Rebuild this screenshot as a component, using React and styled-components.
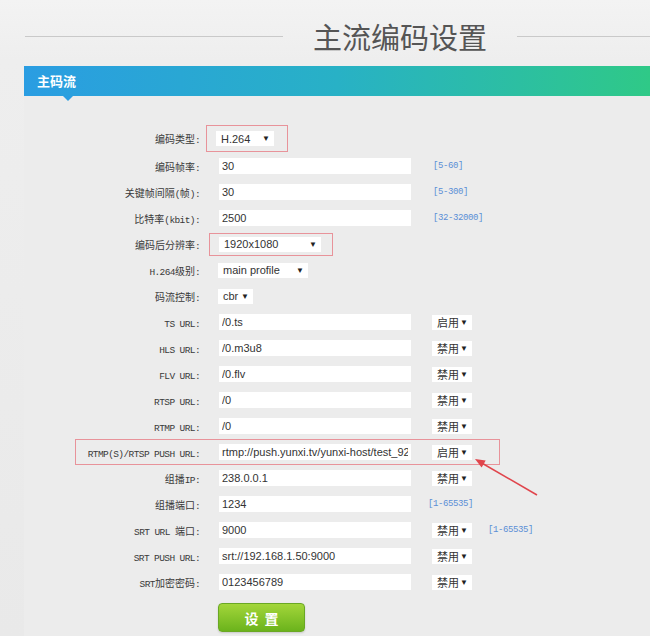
import React from 'react';
import styled, { createGlobalStyle } from 'styled-components';

const GlobalStyle = createGlobalStyle`
  body {
    margin: 0;
    background: #e9e9e9;
  }
`;

const Page = styled.div`
  width: 650px;
  height: 636px;
  overflow: hidden;
  position: relative;
  background: linear-gradient(#f3f3f3 0, #eeeeee 60px, #e9e9e9 100%);
  font-family: 'Noto Sans CJK SC', sans-serif;
`;

const TitleBar = styled.div`
  display: flex;
  align-items: center;
  height: 66px;
  padding: 7px 0 0 25px;
  box-sizing: border-box;
  gap: 30px;
`;

const Line = styled.div`
  height: 1px;
  background: #c9c9c9;
  flex: ${(p) => (p.$grow ? '1' : `0 0 ${p.$w}px`)};
`;

const Title = styled.h1`
  margin: 0;
  font-size: 29px;
  font-weight: 400;
  line-height: 1;
  color: #555;
`;

const Panel = styled.div`
  margin-left: 24px;
  background: #ececec;
`;

const Header = styled.div`
  position: relative;
  height: 30px;
  line-height: 30px;
  padding-left: 13px;
  color: #fff;
  font-size: 13px;
  font-weight: 700;
  background: linear-gradient(90deg, #2a9de2 0%, #28b1c6 50%, #2fc987 100%);
  &::after {
    content: '';
    position: absolute;
    left: 39px;
    bottom: -5px;
    border-left: 5px solid transparent;
    border-right: 5px solid transparent;
    border-top: 5px solid #2a9de2;
  }
`;

const Body = styled.div`
  display: flex;
  flex-direction: column;
  padding-top: 28px;
  height: 540px;
`;

const Row = styled.div`
  position: relative;
  display: flex;
  align-items: center;
  height: ${(p) => p.$h || 26}px;
  ${(p) =>
    p.$marked &&
    `&::before {
      content: '';
      position: absolute;
      left: 51px;
      width: 425px;
      top: 0;
      bottom: 0;
      border: 1px solid #e8939a;
      box-sizing: border-box;
    }`}
`;

const Label = styled.div`
  flex: 0 0 176px;
  text-align: right;
  font-size: 10px;
  color: #3a3a3a;
  white-space: nowrap;
`;

const Latin = styled.span`
  font-family: 'Liberation Mono', monospace;
  font-size: 9.5px;
  letter-spacing: -0.6px;
`;

const Field = styled.input`
  flex: 0 0 192px;
  width: 192px;
  height: 16px;
  margin: 0 0 0 19px;
  padding: 0 3px;
  box-sizing: border-box;
  border: none;
  outline: none;
  background: #fff;
  color: #333;
  font-family: 'Liberation Sans', Arial, sans-serif;
  font-size: 11px;
`;

const Select = styled.div`
  display: flex;
  align-items: center;
  justify-content: space-between;
  flex: 0 0 ${(p) => p.$w}px;
  width: ${(p) => p.$w}px;
  height: 15px;
  margin-left: ${(p) => p.$ml || 0}px;
  padding: 0 4px 0 5px;
  box-sizing: border-box;
  background: #fff;
  color: #333;
  font-family: 'Liberation Sans', 'Noto Sans CJK SC', sans-serif;
  font-size: 11px;
`;

const Caret = styled.span`
  font-size: 8px;
  color: #222;
`;

const Highlight = styled.div`
  display: flex;
  margin-left: ${(p) => p.$ml}px;
  padding: ${(p) => p.$pad};
  border: 1px solid #e8939a;
`;

const Hint = styled.span`
  margin-left: ${(p) => p.$ml || 22}px;
  color: #5b8ed6;
  font-family: 'Liberation Mono', monospace;
  font-size: 9px;
  letter-spacing: -0.4px;
`;

const Button = styled.button`
  align-self: flex-start;
  width: 87px;
  height: 29px;
  margin: 8px 0 0 194px;
  padding: 0 0 0 6px;
  border: 1px solid #6aa824;
  border-radius: 4px;
  background: linear-gradient(#a3d63a, #6bb31c);
  color: #fff;
  font-family: 'Noto Sans CJK SC', sans-serif;
  font-size: 14px;
  font-weight: 700;
  letter-spacing: 6px;
  box-shadow: 0 1px 2px rgba(0, 0, 0, 0.15);
`;

const Annotation = styled.svg`
  position: absolute;
  left: 0;
  top: 0;
  pointer-events: none;
`;

const rows = [
  { label: '编码类型:', h: 29, select: { text: 'H.264', w: 58 }, box: { ml: 6, pad: '5px 13px 5px 9px' } },
  { label: '编码帧率:', value: '30', hint: '[5-60]' },
  { label: '关键帧间隔(帧):', value: '30', hint: '[5-300]' },
  { label: '比特率(kbit):', value: '2500', hint: '[32-32000]' },
  { label: '编码后分辨率:', select: { text: '1920x1080', w: 102 }, box: { ml: 9, pad: '3px 11px 3px 9px' } },
  { label: 'H.264级别:', select: { text: 'main profile', w: 90, ml: 18 } },
  { label: '码流控制:', select: { text: 'cbr', w: 35, ml: 18 } },
  { label: 'TS URL:', value: '/0.ts', sw: '启用' },
  { label: 'HLS URL:', value: '/0.m3u8', sw: '禁用' },
  { label: 'FLV URL:', value: '/0.flv', sw: '禁用' },
  { label: 'RTSP URL:', value: '/0', sw: '禁用' },
  { label: 'RTMP URL:', value: '/0', sw: '禁用' },
  { label: 'RTMP(S)/RTSP PUSH URL:', value: 'rtmp://push.yunxi.tv/yunxi-host/test_9241', sw: '启用', marked: true },
  { label: '组播IP:', value: '238.0.0.1', sw: '禁用' },
  { label: '组播端口:', value: '1234', hint: '[1-65535]', hintMl: 17 },
  { label: 'SRT URL 端口:', value: '9000', sw: '禁用', hint: '[1-65535]', hintMl: 16 },
  { label: 'SRT PUSH URL:', value: 'srt://192.168.1.50:9000', sw: '禁用' },
  { label: 'SRT加密密码:', value: '0123456789', sw: '禁用' },
];

const renderLabel = (text) =>
  text.match(/[\x00-\x7f]+|[^\x00-\x7f]+/g).map((part, i) =>
    /^[\x00-\x7f]/.test(part) ? <Latin key={i}>{part}</Latin> : <span key={i}>{part}</span>
  );

const Dropdown = ({ text, w, ml }) => (
  <Select $w={w} $ml={ml}>
    {text}
    <Caret>▼</Caret>
  </Select>
);

const App = () => {
  return (
    <Page>
      <GlobalStyle />
      <TitleBar>
        <Line $w={258} />
        <Title>主流编码设置</Title>
        <Line $grow />
      </TitleBar>
      <Panel>
        <Header>主码流</Header>
        <Body>
          {rows.map((r) => (
            <Row key={r.label} $h={r.h} $marked={r.marked}>
              <Label>{renderLabel(r.label)}</Label>
              {r.value !== undefined && <Field readOnly value={r.value} />}
              {r.box ? (
                <Highlight $ml={r.box.ml} $pad={r.box.pad}>
                  <Dropdown text={r.select.text} w={r.select.w} />
                </Highlight>
              ) : (
                r.select && <Dropdown {...r.select} />
              )}
              {r.sw && <Dropdown text={r.sw} w={40} ml={21} />}
              {r.hint && <Hint $ml={r.hintMl}>{r.hint}</Hint>}
            </Row>
          ))}
          <Button>设置</Button>
        </Body>
      </Panel>
      <Annotation width="650" height="636">
        <line x1="537" y1="495" x2="480" y2="462" stroke="#e0454c" strokeWidth="1.5" />
        <polygon points="475,459 485.7,460.6 481.6,467.5" fill="#e0454c" />
      </Annotation>
    </Page>
  );
};

export default App;
